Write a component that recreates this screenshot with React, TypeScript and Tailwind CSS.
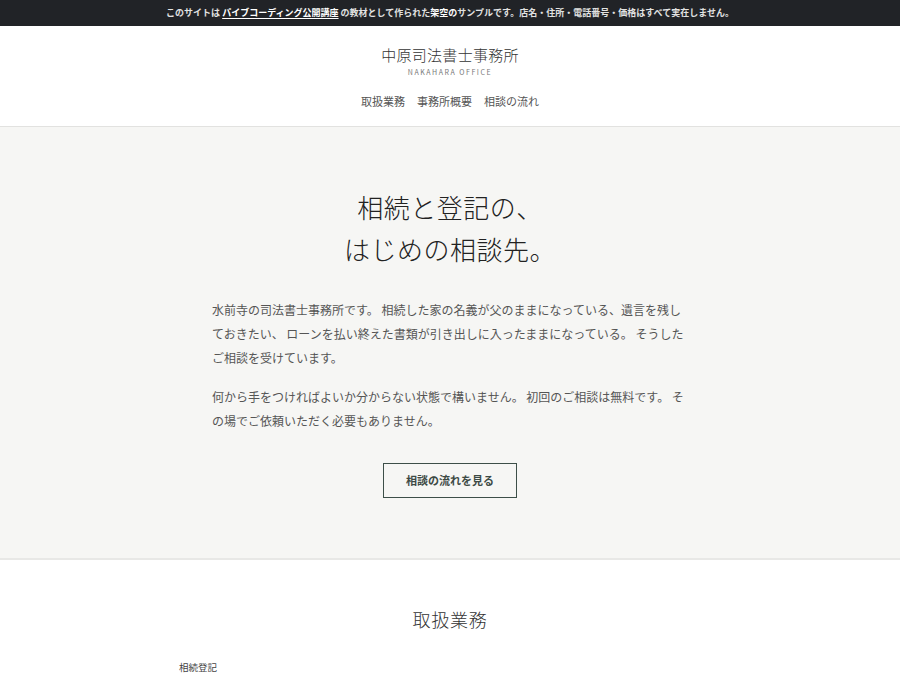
const jp = "font-['Noto_Sans_CJK_JP','Noto_Sans',sans-serif]";
const mincho = "font-['Liberation_Serif','Noto_Sans_CJK_JP',serif]";

const navItems = ["取扱業務", "事務所概要", "相談の流れ"];

function NoticeBar() {
  return (
    <div className="flex h-[26px] items-center justify-center bg-[#212327] text-[9px] font-bold text-[#e2e2e2]">
      <p>
        このサイトは{" "}
        <span className="underline underline-offset-2 text-white">パイブコーディング公開講座</span>{" "}
        の教材として作られた<span className="text-white">架空の</span>サンプルです。店名・住所・電話番号・価格はすべて実在しません。
      </p>
    </div>
  );
}

function Header() {
  return (
    <header className="flex flex-col items-center border-b border-[#e2e2e0] bg-white pt-[19px] pb-[17px]">
      <h1 className={`${mincho} text-[15px] font-light leading-[22px] tracking-[0.02em] text-[#333]`}>中原司法書士事務所</h1>
      <p className="text-[7px] leading-[10px] tracking-[0.22em] text-[#777]">NAKAHARA OFFICE</p>
      <nav className="mt-[16px] flex gap-[12px] text-[11px] leading-[16px] text-[#555]">
        {navItems.map((item) => (
          <a key={item} href="#">
            {item}
          </a>
        ))}
      </nav>
    </header>
  );
}

function Hero() {
  return (
    <section className="border-b-2 border-[#e8e8e6] bg-[#f6f6f4] pt-[62px] pb-[60px]">
      <h2 className={`${mincho} text-center text-[26px] font-light leading-[42px] tracking-[0.02em] text-[#222]`}>
        相続と登記の、
        <br />
        はじめの相談先。
      </h2>
      <div className="mx-auto mt-[25px] w-[476px] text-[12px] leading-[24px] text-[#555]">
        <p>
          水前寺の司法書士事務所です。 相続した家の名義が父のままになっている、遺言を残しておきたい、 ローンを払い終えた書類が引き出しに入ったままになっている。 そうしたご相談を受けています。
        </p>
        <p className="mt-[15px]">
          何から手をつければよいか分からない状態で構いません。 初回のご相談は無料です。 その場でご依頼いただく必要もありません。
        </p>
      </div>
      <div className="mt-[30px] flex justify-center">
        <a
          href="#"
          className="flex h-[35px] w-[134px] items-center justify-center border border-[#3d4f48] text-[11px] font-bold text-[#3d4a45]"
        >
          相談の流れを見る
        </a>
      </div>
    </section>
  );
}

function Services() {
  return (
    <section className="bg-white pt-[47px] pb-[40px]">
      <h2 className={`${mincho} text-center text-[18px] font-light leading-[28px] tracking-[0.04em] text-[#333]`}>取扱業務</h2>
      <div className="mx-auto mt-[25px] w-[542px]">
        <h3 className="text-[9.5px] leading-[14px] text-[#444]">相続登記</h3>
      </div>
    </section>
  );
}

export default function App() {
  return (
    <div className={`${jp} min-h-screen bg-white`}>
      <NoticeBar />
      <Header />
      <Hero />
      <Services />
    </div>
  );
}
